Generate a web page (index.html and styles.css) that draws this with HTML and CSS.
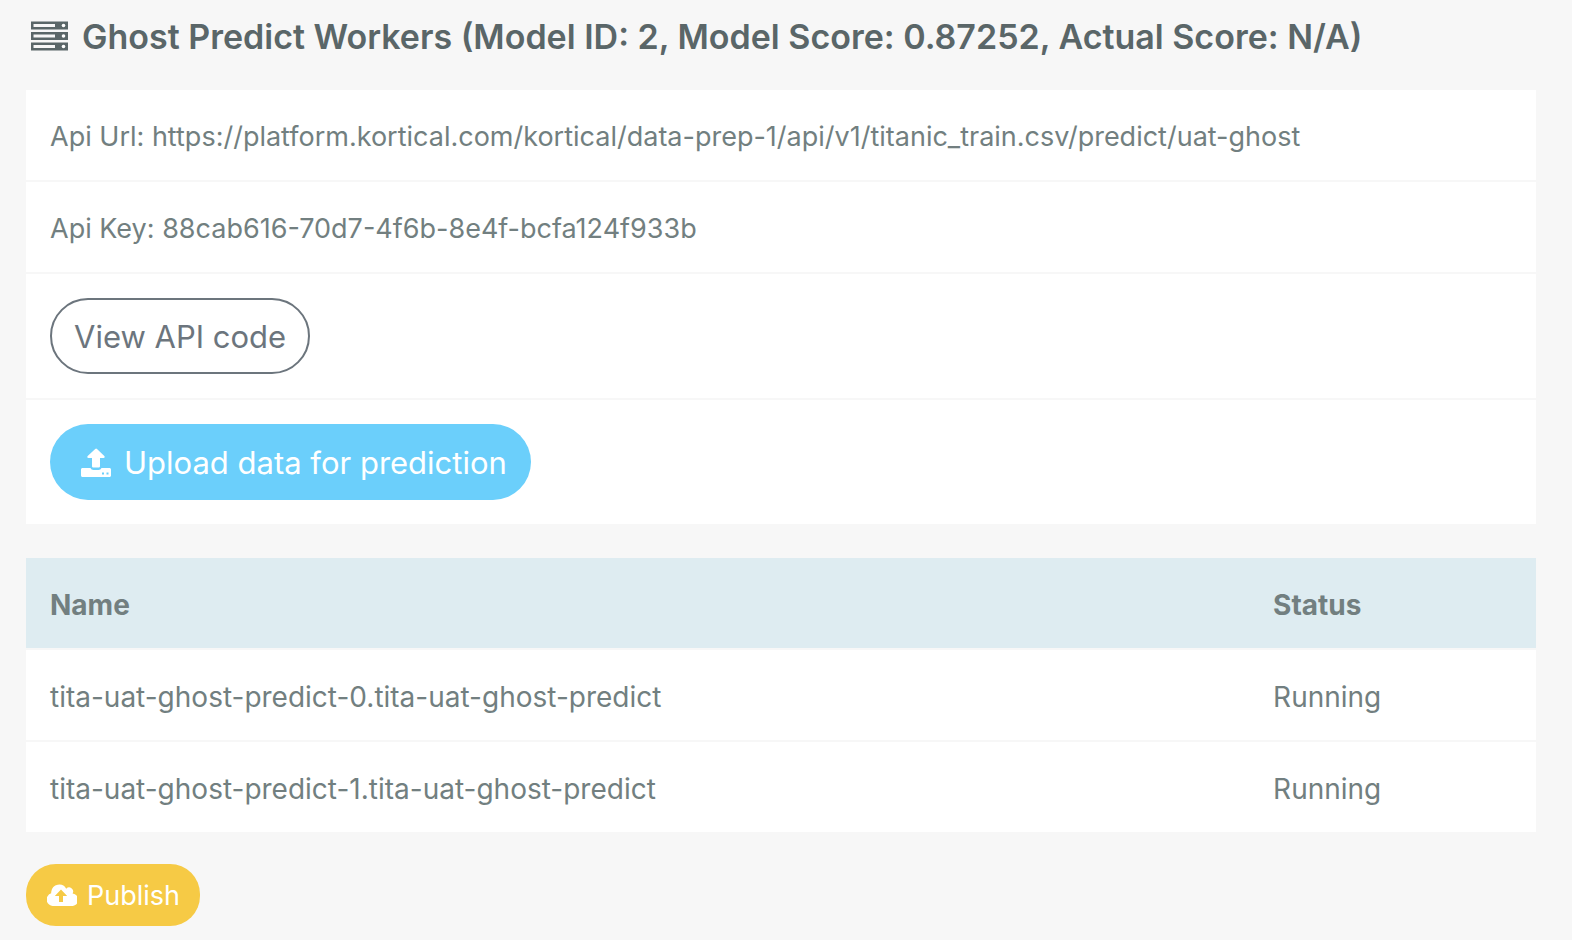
FILE: index.html
```html
<!DOCTYPE html>
<html lang="en">
<head>
    <meta charset="UTF-8">
    <meta name="viewport" content="width=device-width, initial-scale=1.0">
    <title>Ghost Predict Workers</title>
    <link rel="stylesheet" href="styles.css">
</head>
<body>
    <main class="wrapper">
        <h1 class="title">
            <svg class="title-icon" viewBox="0 0 37 30" aria-hidden="true">
                <path fill="currentColor" fill-rule="evenodd" d="M0 .5h37v8H0zM2.500 3v3h21.500V3zM0 11h37v8H0zM2.500 13.500v3h21.500v-3zM0 21.500h37v8H0zM2.500 24v3h21.500v-3z" />
                <g fill="#fff">
                    <circle cx="32.500" cy="4.500" r="1.800" />
                    <circle cx="32.500" cy="15" r="1.800" />
                    <circle cx="32.500" cy="25.500" r="1.800" />
                </g>
            </svg>
            <span>Ghost Predict Workers (Model ID: 2, Model Score: 0.87252, Actual Score: N/A)</span>
        </h1>

        <!-- API details -->
        <section class="panel">
            <div class="panel-row">Api Url: https://platform.kortical.com/kortical/data-prep-1/api/v1/titanic_train.csv/predict/uat-ghost</div>
            <div class="panel-row">Api Key: 88cab616-70d7-4f6b-8e4f-bcfa124f933b</div>
            <div class="panel-row panel-action">
                <button type="button" class="btn btn-outline">View API code</button>
            </div>
            <div class="panel-row panel-action">
                <button type="button" class="btn btn-info">
                    <svg class="upload-icon" viewBox="0 0 30 30" aria-hidden="true">
                        <path fill="currentColor" fill-rule="evenodd" d="M14.2.9a1.500 1.500 0 0 1 1.800 0l7.300 7.100c.9.9.4 2-.8 2H19v8.200c0 .8-.7 1.300-1.500 1.300h-5c-.8 0-1.500-.5-1.500-1.300V10H7.500c-1.200 0-1.700-1.100-.8-2zM1.500 20h8c.5 1.200 1.600 1.900 3 1.900h5c1.400 0 2.500-.7 3-1.900h8c.8 0 1.500.7 1.500 1.500v6c0 .8-.7 1.500-1.500 1.500h-27c-.8 0-1.500-.7-1.500-1.500v-6c0-.8.7-1.500 1.500-1.500zM21 24.500h2v2h-2zM25.500 24.500h2v2h-2z" />
                    </svg>
                    <span>Upload data for prediction</span>
                </button>
            </div>
        </section>

        <!-- Workers -->
        <table class="workers">
            <thead>
                <tr>
                    <th scope="col">Name</th>
                    <th scope="col" class="status">Status</th>
                </tr>
            </thead>
            <tbody>
                <tr>
                    <td>tita-uat-ghost-predict-0.tita-uat-ghost-predict</td>
                    <td>Running</td>
                </tr>
                <tr>
                    <td>tita-uat-ghost-predict-1.tita-uat-ghost-predict</td>
                    <td>Running</td>
                </tr>
            </tbody>
        </table>

        <button type="button" class="btn btn-warning">
            <svg class="cloud-icon" viewBox="0 0 30 22" aria-hidden="true">
                <path fill="currentColor" fill-rule="evenodd" d="M6.500 22A6.500 6.500 0 0 1 4.200 9.300 8 8 0 0 1 4.300 7.500 8 8 0 0 1 19.200 4.700 4 4 0 0 1 25.600 9.400 6.200 6.200 0 0 1 24 22zM14 5.600 7.800 12H12v6h4v-6h4.200z" />
            </svg>
            <span>Publish</span>
        </button>
    </main>
</body>
</html>
```
FILE: styles.css
```css
/* Reset and base styles */
* {
    box-sizing: border-box;
}

body {
    margin: 0;
    font-family: Inter, "Liberation Sans", sans-serif;
    font-size: 27px;
    line-height: 42px;
    color: #727f80;
    background-color: #f7f7f7;
}

.wrapper {
    padding: 13px 36px 14px 26px;
}

/* Page heading */
.title {
    display: flex;
    align-items: center;
    gap: 14px;
    margin: 0 0 29px;
    padding-left: 5px;
    font-size: 34px;
    font-weight: 600;
    line-height: 48px;
    color: #5a6668;
}

.title-icon {
    flex-shrink: 0;
    width: 37px;
    height: 30px;
    margin-bottom: 2px;
}

/* API details */
.panel {
    margin-bottom: 34px;
    background: #fff;
}

.panel-row {
    padding: 26px 24px 22px;
    overflow-wrap: anywhere;
}

.panel-row + .panel-row {
    border-top: 2px solid #f7f7f7;
}

.panel-action {
    padding: 24px;
}

/* Buttons */
.btn {
    display: flex;
    align-items: center;
    border: 2px solid transparent;
    border-radius: 38px;
    font-family: inherit;
    font-size: 31px;
    line-height: 48px;
    padding: 13px 20px 11px 24px;
    color: #fff;
    cursor: pointer;
}

.btn-outline {
    padding-left: 22px;
    padding-right: 22px;
    color: #6c757d;
    border-color: #6c757d;
    background: transparent;
}

.btn-info {
    gap: 13px;
    padding-left: 29px;
    padding-right: 22px;
    background: #6bcffb;
}

.btn-warning {
    gap: 10px;
    padding: 9px 18px 7px 19px;
    border-radius: 30px;
    font-size: 27px;
    line-height: 42px;
    background: #f6ca45;
}

.upload-icon {
    width: 30px;
    height: 30px;
}

.cloud-icon {
    width: 30px;
    height: 22px;
    margin-bottom: 2px;
}

/* Workers table */
.workers {
    width: 100%;
    margin-bottom: 32px;
    border-collapse: separate;
    border-spacing: 0;
    font-size: 28px;
    text-align: left;
    background: #fff;
}

.workers th,
.workers td {
    padding: 26px 24px 22px;
}

.workers th {
    font-weight: 700;
    background: #deecf1;
}

.workers td {
    border-top: 2px solid #f7f7f7;
}

.workers .status {
    width: 19%;
}
```
